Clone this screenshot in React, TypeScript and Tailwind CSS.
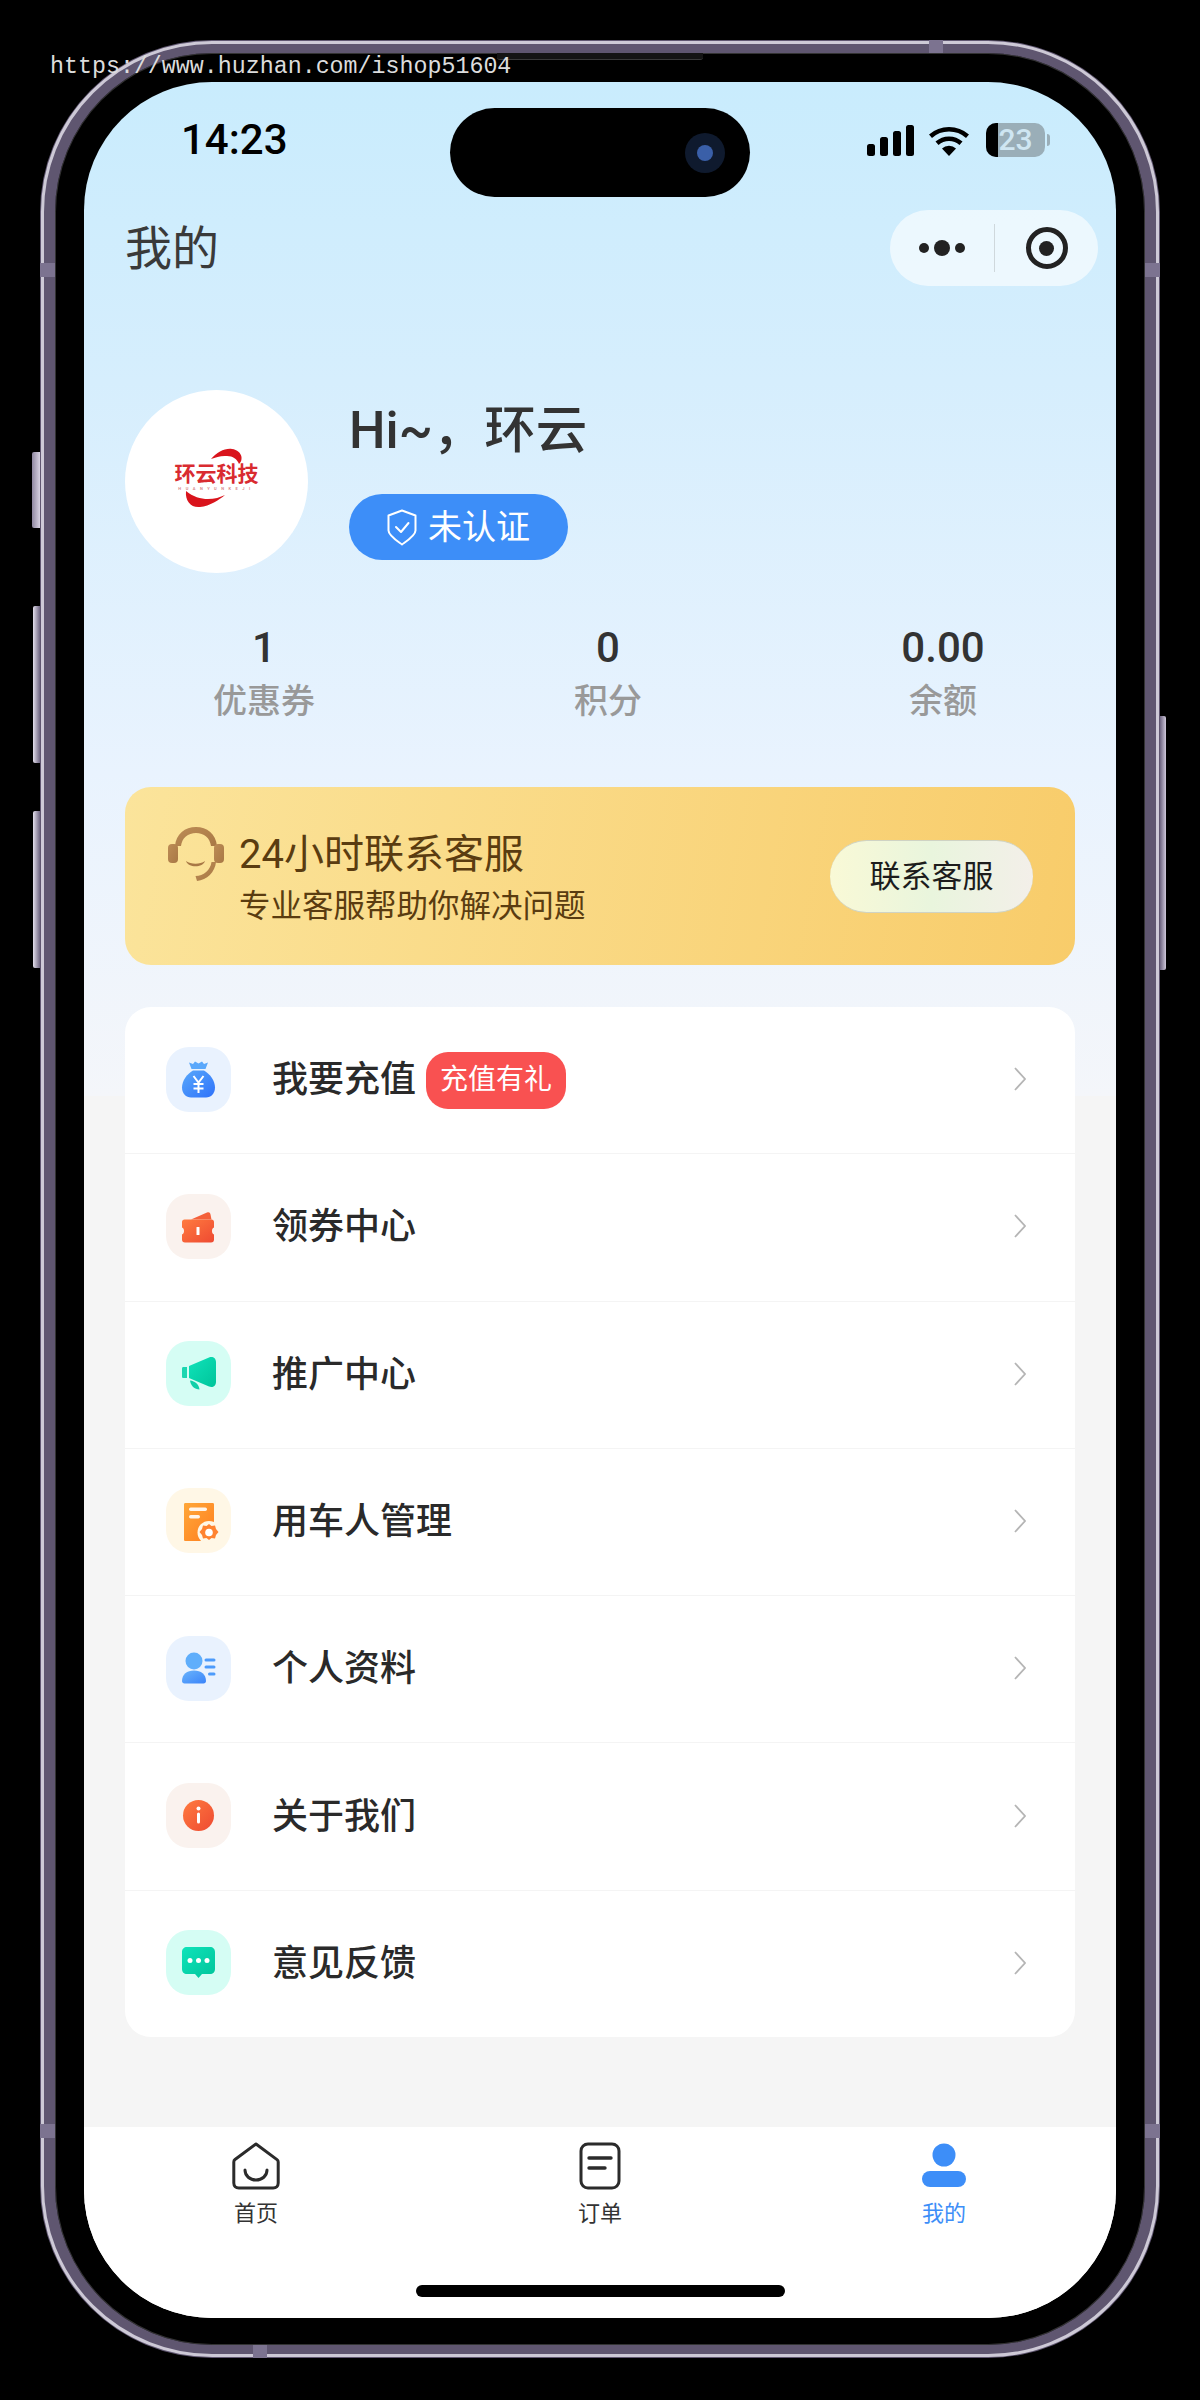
const tabs = [
  { label: "首页", icon: <HomeIcon />, active: false },
  { label: "订单", icon: <OrderIcon />, active: false },
  { label: "我的", icon: <MeIcon />, active: true },
];

const menu = [
  { label: "我要充值", tile: "bg-[#e9f2fe]", icon: <BagIcon />, tag: "充值有礼" },
  { label: "领券中心", tile: "bg-[#faf2ee]", icon: <WalletIcon /> },
  { label: "推广中心", tile: "bg-[#d5fdf4]", icon: <HornIcon /> },
  { label: "用车人管理", tile: "bg-[#fff7e6]", icon: <NoteIcon /> },
  { label: "个人资料", tile: "bg-[#e9f2fe]", icon: <PersonIcon /> },
  { label: "关于我们", tile: "bg-[#faf2ee]", icon: <InfoIcon /> },
  { label: "意见反馈", tile: "bg-[#d5fdf4]", icon: <ChatIcon /> },
];

const stats = [
  { value: "1", label: "优惠券" },
  { value: "0", label: "积分" },
  { value: "0.00", label: "余额" },
];

function Grad({ id, from, to }: { id: string; from: string; to: string }) {
  return (
    <linearGradient id={id} x1="0" y1="0" x2="1" y2="1">
      <stop offset="0" stopColor={from} />
      <stop offset="1" stopColor={to} />
    </linearGradient>
  );
}

function BagIcon() {
  return (
    <svg viewBox="0 0 65 65" className="size-[65px]">
      <defs>
        <Grad id="bag" from="#58a8fb" to="#2f72fa" />
      </defs>
      <path d="M23 15.500l4 1.500 2-2.500 3.500 2 3.500-2 2 2.500 4-1.500-2.500 6.500h-14z" fill="#5aa8fb" />
      <path d="M27 23.500h11c6 3.500 11 10 11 17 0 6-4 10-9 10H25c-5 0-9-4-9-10 0-7 5-13.500 11-17z" fill="url(#bag)" />
      <path d="M27.500 29l5 6.500 5-6.500M32.500 35.500V46M27.500 37h10M27.500 41.500h10" fill="none" stroke="#fff" strokeWidth="2" />
    </svg>
  );
}

function WalletIcon() {
  return (
    <svg viewBox="0 0 65 65" className="size-[65px]">
      <defs>
        <Grad id="wallet" from="#ff7b3f" to="#ee4a32" />
      </defs>
      <path d="M25 25.500l16-7c2-.800 3 0 3.500 2l1 5z" fill="#f4603a" />
      <path d="M18.500 25.500h27c1.500 0 2.500 1 2.500 2.500v5.500c-1.300 .500-2 1.900-2 3.500s.700 3 2 3.500v5c0 2-1 3-3 3H19c-2 0-3-1-3-3v-5c1.300-.500 2-1.900 2-3.500s-.700-3-2-3.500V28c0-1.500 1-2.500 2.500-2.500z" fill="url(#wallet)" />
      <rect x="30.500" y="33" width="3" height="8" fill="#fff" rx=".5" />
    </svg>
  );
}

function HornIcon() {
  return (
    <svg viewBox="0 0 65 65" className="size-[65px]">
      <defs>
        <Grad id="horn" from="#0fe3ba" to="#00c49a" />
      </defs>
      <path d="M17.500 26H21v11h-3.500c-1 0-1.500-.500-1.500-1.500v-8c0-1 .500-1.500 1.500-1.500z" fill="#1cd6b0" />
      <path d="M23 25l20-8.500c3.500-1.500 7 .500 7 4.500v20c0 4-3.500 6-7 4.500L23 37z" fill="url(#horn)" />
      <path d="M24 39.500c5 .500 9 4 9.500 9-5 0-9-4-9.500-9z" fill="#10cfa8" />
    </svg>
  );
}

function NoteIcon() {
  return (
    <svg viewBox="0 0 65 65" className="size-[65px]">
      <defs>
        <Grad id="note" from="#ffa739" to="#ff7f1f" />
      </defs>
      <path d="M19.500 15h27c1 0 1.500 .500 1.500 1.500v35c0 1-.500 1.500-1.500 1.500h-27c-1 0-1.500-.500-1.500-1.500v-35c0-1 .500-1.500 1.500-1.500z" fill="url(#note)" />
      <rect x="23" y="19.500" width="18" height="3.500" rx="1.700" fill="#fff" opacity=".9" />
      <rect x="23" y="27" width="11" height="3.500" rx="1.700" fill="#fff" opacity=".9" />
      <circle cx="43" cy="44.500" r="11.500" fill="#fff7e6" />
      <path d="M43 36l2.500 2 3.500-.500 1 3.500 2.500 3-2.500 3-1 3.500-3.500-.500-2.500 2-2.500-2-3.500.500-1-3.500-2.500-3 2.500-3 1-3.500 3.500 .500z" fill="#ff8330" />
      <circle cx="43" cy="44.500" r="3.800" fill="#fff" />
    </svg>
  );
}

function PersonIcon() {
  return (
    <svg viewBox="0 0 65 65" className="size-[65px]">
      <defs>
        <Grad id="person" from="#6ab4fb" to="#3b84fa" />
      </defs>
      <circle cx="28" cy="25" r="8.500" fill="#5faefb" />
      <path d="M16 45c0-6.500 5-10.500 12-10.500S40 38.500 40 45c0 1.500-1 2.500-2.500 2.500h-19C17 47.500 16 46.500 16 45z" fill="url(#person)" />
      <rect x="38.500" y="22.500" width="11" height="3" rx="1.500" fill="#4d9bfb" />
      <rect x="38.500" y="29.500" width="11" height="3" rx="1.500" fill="#4d9bfb" />
      <rect x="42" y="36.500" width="7.500" height="3" rx="1.500" fill="#4d9bfb" />
    </svg>
  );
}

function InfoIcon() {
  return (
    <svg viewBox="0 0 65 65" className="size-[65px]">
      <defs>
        <Grad id="info" from="#ff7b3f" to="#ee4a32" />
      </defs>
      <circle cx="32.500" cy="32.500" r="15.500" fill="url(#info)" />
      <circle cx="32.500" cy="25.500" r="2" fill="#fff" />
      <rect x="31" y="29.500" width="3" height="11" rx="1.500" fill="#fff" />
    </svg>
  );
}

function ChatIcon() {
  return (
    <svg viewBox="0 0 65 65" className="size-[65px]">
      <defs>
        <Grad id="chat" from="#0fe3ba" to="#00c49a" />
      </defs>
      <path d="M21 17h23c3 0 5 2 5 5v17c0 3-2 5-5 5H36l-3.500 4-3.500-4h-8c-3 0-5-2-5-5V22c0-3 2-5 5-5z" fill="url(#chat)" />
      <circle cx="24" cy="30.500" r="2.500" fill="#fff" />
      <circle cx="32.500" cy="30.500" r="2.500" fill="#fff" />
      <circle cx="41" cy="30.500" r="2.500" fill="#fff" />
    </svg>
  );
}

function HomeIcon() {
  return (
    <svg viewBox="0 0 48 48" className="h-[48px] w-[48px]" fill="none" stroke="#2b2b2b">
      <path d="M24 2L3 17.500c-.800 .600-1.200 1.400-1.200 2.400V41c0 3 2 5 5 5h34.400c3 0 5-2 5-5V20c0-1-.400-1.800-1.200-2.400z" strokeWidth="3" strokeLinejoin="round" />
      <path d="M13 28c0 6 5 10 11 10s11-4 11-10" strokeWidth="3" strokeLinecap="round" />
    </svg>
  );
}

function OrderIcon() {
  return (
    <svg viewBox="0 0 48 48" className="h-[48px] w-[48px]" fill="none" stroke="#2b2b2b">
      <rect x="5" y="2" width="38" height="44" rx="7" strokeWidth="3" />
      <path d="M13 16h22M13 26h16" strokeWidth="3.400" strokeLinecap="round" />
    </svg>
  );
}

function MeIcon() {
  return (
    <svg viewBox="0 0 48 48" className="h-[48px] w-[48px]" fill="#3d8ef8">
      <circle cx="24" cy="13" r="11.500" />
      <rect x="2" y="29" width="44" height="16" rx="8" />
    </svg>
  );
}

function Avatar() {
  return (
    <div className="flex size-[183px] shrink-0 flex-col items-center justify-center rounded-full bg-white">
      <div className="relative flex w-[100px] flex-col items-center pb-[10px]">
        <svg viewBox="0 0 100 70" className="absolute left-0 top-[-22px] h-[70px] w-[100px]">
          <path d="M44 18C50 11 58 7 65 8c5 .500 9 4 9.500 8 .300 3-.500 5-2.500 7-2-5-6-8-12-8-6-.500-11 1-16 3z" fill="#d9141c" />
          <path d="M19 50c-1 10 5 17 14 16 10-1 19-7 25-12-10 5-26 7-39-4z" fill="#d9141c" />
        </svg>
        <span className="relative whitespace-nowrap text-[21px] font-bold leading-[22px] text-[#d92b30]">环云科技</span>
        <span className="relative mt-[1px] whitespace-nowrap text-[4px] font-bold leading-[5px] tracking-[4.500px] text-[#d98a8c]">HUANYUNKEJI</span>
      </div>
    </div>
  );
}

function ShieldIcon() {
  return (
    <svg viewBox="0 0 30 37" className="h-[37px] w-[30px]" fill="none" stroke="#fff" strokeWidth="2" strokeLinejoin="round" strokeLinecap="round">
      <path d="M15 1.500l13.500 5v15c0 5-8 10-13.500 14C9.500 31.500 1.500 26.500 1.500 21.500v-15z" />
      <path d="M9 18l5 5 7.500-9" />
    </svg>
  );
}

function Headset() {
  return (
    <svg viewBox="0 0 56 56" className="h-[56px] w-[56px] shrink-0">
      <defs>
        <linearGradient id="hs" x1="0" y1="0" x2="1" y2="1">
          <stop offset="0" stopColor="#bd8c55" />
          <stop offset="1" stopColor="#a87845" />
        </linearGradient>
      </defs>
      <path d="M7 20C8 8 17 1 28 1s20 7 21 19h-6C42 12 36 7 28 7S14 12 13 20z" fill="url(#hs)" />
      <rect x="0" y="18" width="10" height="19" rx="4" fill="url(#hs)" />
      <rect x="46" y="18" width="10" height="19" rx="4" fill="url(#hs)" />
      <path d="M18 35c5 3.500 14 3.500 19 0-2 7-17 7-19 0z" fill="#a87845" />
      <path d="M48 36c-1 10-9 18-19 19l-1.500-5c8 0 15-6 16-14z" fill="url(#hs)" />
    </svg>
  );
}

function StatusIcons() {
  return (
    <div className="flex items-center">
      <svg viewBox="0 0 47 31" className="h-[31px] w-[47px]" fill="#000">
        <rect x="0" y="19" width="8" height="12" rx="2.500" />
        <rect x="13" y="12" width="8" height="19" rx="2.500" />
        <rect x="26" y="6" width="8" height="25" rx="2.500" />
        <rect x="39" y="0" width="8" height="31" rx="2.500" />
      </svg>
      <svg viewBox="0 0 40 31" className="ml-[15px] h-[31px] w-[40px]" fill="none" stroke="#000" strokeWidth="4.500">
        <path d="M1.500 11.200A28 28 0 0 1 38.500 11.200" />
        <path d="M8 18.300A18 18 0 0 1 32 18.300" />
        <path d="M20 31L13 23.500A10 10 0 0 1 27 23.500z" fill="#000" stroke="none" />
      </svg>
      <div className="relative ml-[17px] flex h-[34px] w-[59px] rounded-[10px] bg-[#9aaeb8]">
        <div className="h-full w-[12px] rounded-l-[10px] bg-black" />
        <span className="absolute inset-0 flex items-center justify-center text-[30px] font-medium leading-none text-[#cfe6f2]">23</span>
      </div>
      <div className="ml-[2px] h-[12px] w-[3px] rounded-r-full bg-[#9aaeb8]" />
    </div>
  );
}

function Capsule() {
  return (
    <div className="flex h-[76px] w-[208px] items-center rounded-full bg-white/60">
      <div className="flex w-[104px] items-center justify-center gap-[5px]">
        <span className="size-[10px] rounded-full bg-[#222]" />
        <span className="size-[16px] rounded-full bg-[#222]" />
        <span className="size-[10px] rounded-full bg-[#222]" />
      </div>
      <div className="h-[48px] w-px bg-[#cfd8dc]" />
      <div className="flex flex-1 items-center justify-center">
        <div className="flex size-[42px] items-center justify-center rounded-full border-[5px] border-[#222]">
          <span className="size-[15px] rounded-full bg-[#222]" />
        </div>
      </div>
    </div>
  );
}

export default function App() {
  return (
    <div className="relative h-[2400px] w-[1200px] overflow-hidden bg-black pl-[40px] pt-[40px] font-['Roboto','Noto_Sans_CJK_SC',sans-serif]">
      {/* watermark */}
      <div className="absolute left-[50px] top-[52px] z-20 font-['Liberation_Mono',monospace] text-[23.300px] leading-[30px] text-[#dcdcdc]">https://www.huzhan.com/ishop51604</div>

      {/* side buttons */}
      <div className="absolute left-[32px] top-[452px] h-[76px] w-[8px] rounded-l-[2px] bg-[linear-gradient(to_right,#8f87a0,#d8d2e2)]" />
      <div className="absolute left-[33px] top-[606px] h-[157px] w-[7px] rounded-l-[2px] bg-[linear-gradient(to_right,#e3dfec,#6d6480)]" />
      <div className="absolute left-[33px] top-[811px] h-[157px] w-[7px] rounded-l-[2px] bg-[linear-gradient(to_right,#e3dfec,#6d6480)]" />
      <div className="absolute left-[1160px] top-[716px] h-[254px] w-[6px] rounded-r-[2px] bg-[linear-gradient(to_right,#6d6480,#cfc8da)]" />

      {/* phone body */}
      <div className="relative h-[2318px] w-[1120px] rounded-[172px] border-x-[15px] border-y-[13px] border-[#5f5670] bg-black shadow-[inset_0_0_0_1px_#333]">
        <div className="pointer-events-none absolute inset-x-[-14px] inset-y-[-12px] rounded-[171px] border-[3px] border-[#cdc9d6]" />
        <div className="absolute left-[-15px] top-[210px] h-[14px] w-[15px] bg-[#7c7390]" />
        <div className="absolute right-[-15px] top-[210px] h-[14px] w-[15px] bg-[#7c7390]" />
        <div className="absolute left-[-15px] top-[2071px] h-[14px] w-[15px] bg-[#7c7390]" />
        <div className="absolute right-[-15px] top-[2071px] h-[14px] w-[15px] bg-[#7c7390]" />
        <div className="absolute left-[874px] top-[-13px] h-[13px] w-[14px] bg-[#7c7390]" />
        <div className="absolute bottom-[-13px] left-[198px] h-[13px] w-[14px] bg-[#7c7390]" />
        {/* sensor housing under the top edge */}
        <div className="absolute left-[442px] top-0 h-[7px] w-[206px] rounded-b-[3px] border-b border-[#3a3a3a] bg-[#141414]" />

        {/* screen */}
        <div className="absolute left-[29px] top-[29px] flex h-[2236px] w-[1032px] flex-col overflow-hidden rounded-[128px] bg-[linear-gradient(to_bottom,#c9ecfd_0px,#d6eefd_300px,#e9f3fe_690px,#f4f6fa_1014px,#f5f5f5_1014px)]">
          {/* status bar */}
          <div className="relative flex h-[116px] shrink-0 items-center justify-between pl-[97px] pr-[66px]">
            <span className="text-[42px] font-medium leading-none text-black">14:23</span>
            <div className="absolute left-[366px] top-[26px] flex h-[89px] w-[300px] items-center justify-end rounded-full bg-black pr-[25px]">
              <div className="flex size-[40px] items-center justify-center rounded-full bg-[#0f1a2e]">
                <span className="size-[16px] rounded-full bg-[#3a5fa8]" />
              </div>
            </div>
            <StatusIcons />
          </div>

          {/* nav bar */}
          <div className="flex h-[100px] shrink-0 items-center justify-between pl-[41px] pr-[18px]">
            <span className="text-[47px] leading-none text-[#3a3a3a]">我的</span>
            <Capsule />
          </div>

          {/* profile */}
          <div className="mt-[92px] flex pl-[41px]">
            <Avatar />
            <div className="ml-[41px] flex flex-col items-start">
              <div className="mt-[11px] text-[51.500px] font-medium leading-[60px] text-[#333]">Hi~，环云</div>
              <div className="mt-[33px] flex h-[66px] w-[219px] items-center justify-center gap-[11px] rounded-full bg-[#3d8ef8]">
                <ShieldIcon />
                <span className="text-[34px] leading-none text-white">未认证</span>
              </div>
            </div>
          </div>

          {/* stats */}
          <div className="ml-[8px] mt-[52px] grid grid-cols-[344px_344px_326px]">
            {stats.map((s) => (
              <div key={s.label} className="flex flex-col items-center">
                <span className="text-[42px] font-medium leading-[46px] text-[#333]">{s.value}</span>
                <span className="mt-[10px] text-[34px] font-medium leading-[40px] text-[#999]">{s.label}</span>
              </div>
            ))}
          </div>

          {/* service card */}
          <div className="mx-[41px] mt-[66px] flex h-[178px] shrink-0 items-start justify-between rounded-[26px] bg-[linear-gradient(100deg,#fbe49b,#f8cc6a)] pl-[43px] pr-[42px]">
            <div className="mt-[39px] flex items-start gap-[15px]">
              <Headset />
              <div className="mt-[7px] flex flex-col">
                <span className="text-[40px] leading-[44px] text-[#5a3c10]">24小时联系客服</span>
                <span className="mt-[10px] text-[31.500px] leading-[40px] text-[#5a3c10]">专业客服帮助你解决问题</span>
              </div>
            </div>
            <div className="mt-[53px] flex h-[73px] w-[203px] items-center justify-center rounded-full border-y border-[#cfd3c4] bg-[linear-gradient(to_right,#f9f9d6,#e9f5dd,#f3efe9)] pt-[2px] text-[31px] text-[#1c1c1c]">联系客服</div>
          </div>

          {/* menu */}
          <div className="mx-[41px] mt-[42px] flex h-[1030px] shrink-0 flex-col overflow-hidden rounded-[26px] bg-white">
            {menu.map((m, i) => (
              <div key={m.label} className={`flex flex-1 items-center pl-[41px] pr-[49px] ${i < menu.length - 1 ? "border-b border-[#f4f4f4]" : ""}`}>
                <div className={`mb-[2px] size-[65px] shrink-0 rounded-[23px] ${m.tile}`}>{m.icon}</div>
                <span className="ml-[41px] text-[36px] font-medium leading-none text-[#2a2a2a]">{m.label}</span>
                {m.tag && <span className="ml-[10px] flex h-[57px] w-[140px] items-center justify-center rounded-[22px] bg-[#f95151] text-[28px] leading-none text-white">{m.tag}</span>}
                <svg viewBox="0 0 12 24" className="mb-[2px] ml-auto h-[24px] w-[12px]" fill="none" stroke="#b5b5b5" strokeWidth="1.800">
                  <path d="M1 1l10 11L1 23" />
                </svg>
              </div>
            ))}
          </div>

          {/* tab bar */}
          <div className="mt-auto flex h-[191px] shrink-0 flex-col bg-white">
            <div className="grid grid-cols-3 pt-[15px]">
              {tabs.map((t) => (
                <div key={t.label} className="flex flex-col items-center">
                  {t.icon}
                  <span className={`mt-[11px] text-[22px] leading-[26px] ${t.active ? "text-[#3d8ef8]" : "text-[#333]"}`}>{t.label}</span>
                </div>
              ))}
            </div>
            <div className="mx-auto mt-[58px] h-[12px] w-[369px] rounded-full bg-black" />
          </div>
        </div>
      </div>
    </div>
  );
}
